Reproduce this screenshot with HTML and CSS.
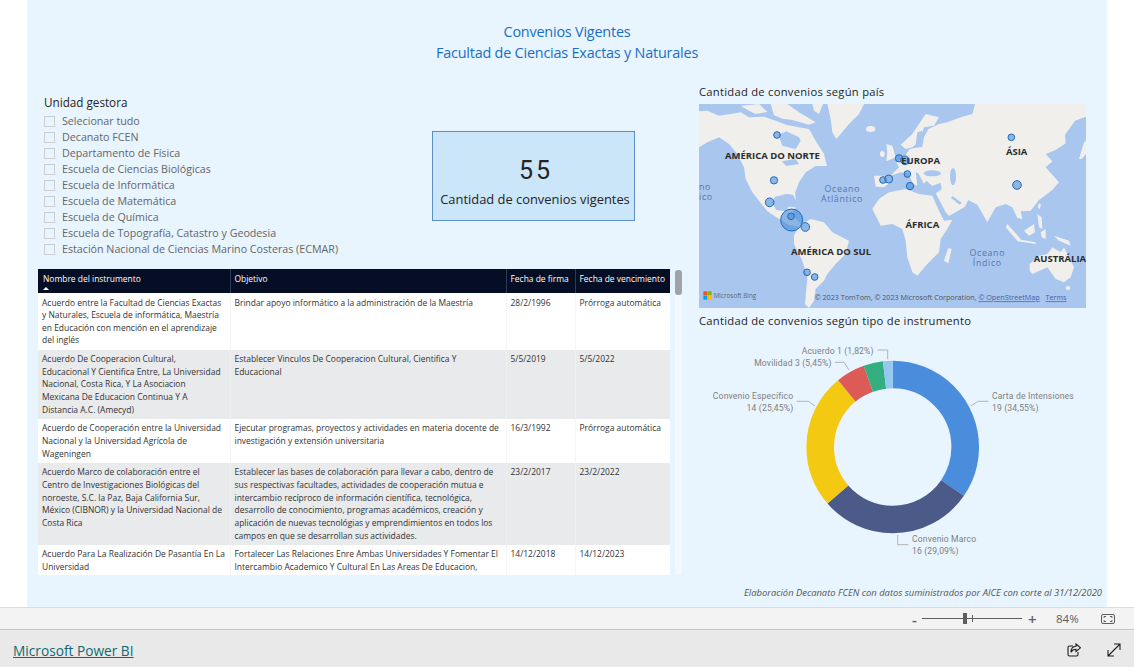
FILE: index.html
```html
<!DOCTYPE html>
<html lang="es">
<head>
<meta charset="utf-8">
<title>Convenios Vigentes</title>
<link rel="stylesheet" href="styles.css">
</head>
<body>
<div class="app">
  <main class="stage">
    <section class="canvas">
      <h1 class="report-title">Convenios Vigentes<br>Facultad de Ciencias Exactas y Naturales</h1>
      <div class="board">
        <div class="left">
          <div class="upper">
            <div class="slicer">
              <h2 class="slicer-title">Unidad gestora</h2>
              <ul class="slicer-list">
                <li class="slicer-item"><span class="check"></span>Selecionar tudo</li>
                <li class="slicer-item"><span class="check"></span>Decanato FCEN</li>
                <li class="slicer-item"><span class="check"></span>Departamento de Física</li>
                <li class="slicer-item"><span class="check"></span>Escuela de Ciencias Biológicas</li>
                <li class="slicer-item"><span class="check"></span>Escuela de Informática</li>
                <li class="slicer-item"><span class="check"></span>Escuela de Matemática</li>
                <li class="slicer-item"><span class="check"></span>Escuela de Química</li>
                <li class="slicer-item"><span class="check"></span>Escuela de Topografía, Catastro y Geodesia</li>
                <li class="slicer-item"><span class="check"></span>Estación Nacional de Ciencias Marino Costeras (ECMAR)</li>
              </ul>
            </div>
            <div class="kpi">
              <div class="kpi-value">55</div>
              <div class="kpi-label">Cantidad de convenios vigentes</div>
            </div>
          </div>
          <div class="table-visual">
            <div class="table-clip">
              <table class="grid">
                <colgroup><col class="c1"><col class="c2"><col class="c3"><col class="c4"></colgroup>
                <thead>
                  <tr>
                    <th>Nombre del instrumento<span class="sort"></span></th>
                    <th>Objetivo</th>
                    <th>Fecha de firma</th>
                    <th>Fecha de vencimiento</th>
                  </tr>
                </thead>
                <tbody>
                  <tr>
                    <td>Acuerdo entre la Facultad de Ciencias Exactas<br>y Naturales, Escuela de informática, Maestría<br>en Educación con mención en el aprendizaje<br>del inglés</td>
                    <td>Brindar apoyo informático a la administración de la Maestría</td>
                    <td>28/2/1996</td>
                    <td>Prórroga automática</td>
                  </tr>
                  <tr class="alt">
                    <td>Acuerdo De Cooperacion Cultural,<br>Educacional Y Cientifica Entre, La Universidad<br>Nacional, Costa Rica, Y La Asociacion<br>Mexicana De Educacion Continua Y A<br>Distancia A.C. (Amecyd)</td>
                    <td>Establecer Vinculos De Cooperacion Cultural, Cientifica Y<br>Educacional</td>
                    <td>5/5/2019</td>
                    <td>5/5/2022</td>
                  </tr>
                  <tr>
                    <td>Acuerdo de Cooperación entre la Universidad<br>Nacional y la Universidad Agrícola de<br>Wageningen</td>
                    <td>Ejecutar programas, proyectos y actividades en materia docente de<br>investigación y extensión universitaria</td>
                    <td>16/3/1992</td>
                    <td>Prórroga automática</td>
                  </tr>
                  <tr class="alt">
                    <td>Acuerdo Marco de colaboración entre el<br>Centro de Investigaciones Biológicas del<br>noroeste, S.C. la Paz, Baja California Sur,<br>México (CIBNOR) y la Universidad Nacional de<br>Costa Rica</td>
                    <td>Establecer las bases de colaboración para llevar a cabo, dentro de<br>sus respectivas facultades, actividades de cooperación mutua e<br>intercambio recíproco de información científica, tecnológica,<br>desarrollo de conocimiento, programas académicos, creación y<br>aplicación de nuevas tecnológias y emprendimientos en todos los<br>campos en que se desarrollan sus actividades.</td>
                    <td>23/2/2017</td>
                    <td>23/2/2022</td>
                  </tr>
                  <tr>
                    <td>Acuerdo Para La Realización De Pasantía En La<br>Universidad</td>
                    <td>Fortalecer Las Relaciones Enre Ambas Universidades Y Fomentar El<br>Intercambio Academico Y Cultural En Las Areas De Educacion,</td>
                    <td>14/12/2018</td>
                    <td>14/12/2023</td>
                  </tr>
                </tbody>
              </table>
            </div>
            <div class="scrollbar"><div class="thumb"></div></div>
          </div>
        </div>
        <div class="right">
          <h2 class="chart-title">Cantidad de convenios según país</h2>
          <svg class="map" viewBox="27 72 1161 612" width="387" height="204" xmlns="http://www.w3.org/2000/svg">
            <rect class="sea" x="27" y="72" width="1161" height="612"/>
            <g class="land" transform="translate(27 72)">
              <path d="M0 22L25 20L60 35L95 30L125 25L150 40L195 38L230 50L262 62L300 70L330 75L350 110L375 150L384 186L350 186L320 205L300 235L288 268L292 290L282 272L262 270L228 278L218 296L232 318L262 322L268 308L290 310L278 330L296 350L308 362L296 368L268 362L240 345L205 322L180 290L160 265L140 225L135 190L115 150L90 120L60 100L25 115L0 130Z"/>
              <path d="M125 5L180 0L205 24L170 30L150 20ZM215 0L265 0L300 25L350 55L330 62L280 48L250 44L225 34ZM340 0L372 0L360 30L345 20Z"/>
              <path d="M385 0L495 0L480 30L450 60L425 90L412 105L400 85L395 45Z"/>
              <ellipse cx="515" cy="75" rx="14" ry="9"/>
              <path d="M300 365L335 345L375 355L400 385L450 410L440 450L410 480L385 510L375 530L350 555L345 590L330 612L318 600L325 520L310 470L285 420L285 395Z"/>
            </g>
            <g class="inland" transform="translate(27 72)">
              <path d="M238 92L262 82L300 100L305 110L290 135L250 125Z"/>
              <path d="M248 172L290 165L300 180L262 186Z"/>
            </g>
            <g class="land" transform="translate(597 72)">
              <path d="M-50 315L-30 285L0 265L50 255L90 270L130 275L150 320L165 350L190 347L175 375L155 405L150 445L115 480L85 515L70 505L55 460L50 410L40 375L10 360L-25 365Z"/>
              <path d="M178 432L188 435L178 478L165 470Z"/>
              <path d="M-45 215L5 215L10 230L-15 250L-40 248Z"/>
              <path d="M5 215L30 190L22 175L48 155L62 135L100 128L105 100L118 75L150 60L175 55L215 40L250 30L258 0L591 0L591 38L558 50L528 92L530 118L500 138L470 150L490 172L470 190L510 235L490 258L450 288L425 320L395 322L400 345L385 342L370 310L350 300L320 310L295 355L265 302L238 288L228 308L180 336L170 325L140 268L158 256L155 236L130 246L112 230L105 240L88 208L80 205L85 245L72 240L58 208L35 205Z"/>
              <path d="M35 122L70 90L110 30L150 40L135 65L105 70L92 110L70 130L50 135Z"/>
              <path d="M-8 120L10 125L20 160L-8 172L-5 145Z"/>
              <ellipse cx="-20" cy="150" rx="7" ry="9"/>
              <path d="M355 360L395 405L385 410L350 370ZM385 405L440 415L440 420L385 412ZM405 380L435 360L438 385L420 395ZM445 330L458 340L460 375L450 370ZM455 385L470 375L470 405L458 400ZM495 395L540 410L545 425L510 410ZM570 165L585 115L591 110L591 150L578 165ZM450 298L456 302L452 316L446 310Z"/>
              <path d="M422 480L450 455L475 450L490 430L515 445L525 430L555 490L545 520L525 535L500 525L475 490L430 510L422 500Z"/>
              <ellipse cx="537" cy="552" rx="7" ry="6"/>
            </g>
            <g class="inland" transform="translate(597 72)">
              <ellipse cx="130" cy="208" rx="26" ry="9"/>
              <ellipse cx="192" cy="218" rx="9" ry="26"/>
              <path d="M190 276L218 296L212 302L186 282Z"/>
              <path d="M85 85L100 80L95 125L80 120Z"/>
            </g>
            <g class="bubbles">
              <circle cx="305" cy="420" r="33"/><circle cx="303" cy="409" r="10"/>
              <circle cx="261" cy="165" r="10"/><circle cx="252" cy="301" r="11"/>
              <circle cx="239" cy="367" r="13"/><circle cx="346" cy="441" r="13"/>
              <circle cx="351" cy="577" r="10"/><circle cx="374" cy="591" r="10"/>
              <circle cx="627" cy="235" r="11"/><circle cx="645" cy="241" r="13"/>
              <circle cx="579" cy="300" r="10"/><circle cx="596" cy="297" r="12"/>
              <circle cx="652" cy="282" r="10"/><circle cx="660" cy="318" r="11"/>
              <circle cx="964" cy="172" r="10"/><circle cx="981" cy="315" r="13"/>
            </g>
            <g class="map-labels">
              <text x="247" y="236" text-anchor="middle">AMÉRICA DO NORTE</text>
              <text x="692" y="251" text-anchor="middle">EUROPA</text>
              <text x="980" y="226" text-anchor="middle">ÁSIA</text>
              <text x="697" y="443" text-anchor="middle">ÁFRICA</text>
              <text x="423" y="524" text-anchor="middle">AMÉRICA DO SUL</text>
              <text x="1110" y="545" text-anchor="middle">AUSTRÁLIA</text>
            </g>
            <g class="map-water">
              <text x="457" y="335" text-anchor="middle">Oceano</text>
              <text x="456" y="365" text-anchor="middle">Atlântico</text>
              <text x="892" y="527" text-anchor="middle">Oceano</text>
              <text x="892" y="557" text-anchor="middle">Índico</text>
              <text x="27" y="331">no</text>
              <text x="27" y="361">ico</text>
            </g>
            <g class="bing-logo">
              <rect class="b1" x="40" y="634" width="12" height="12"/>
              <rect class="b2" x="53" y="634" width="12" height="12"/>
              <rect class="b3" x="40" y="647" width="12" height="12"/>
              <rect class="b4" x="53" y="647" width="12" height="12"/>
            </g>
            <text class="bing" x="71" y="653">Microsoft Bing</text>
            <text class="attrib" x="374" y="661">© 2023 TomTom, © 2023 Microsoft Corporation, <tspan class="attrib-link">© OpenStreetMap</tspan>  <tspan class="attrib-link" dx="12">Terms</tspan></text>
          </svg>
          <h2 class="chart-title chart-title-2">Cantidad de convenios según tipo de instrumento</h2>
          <svg class="donut" viewBox="0 0 387 232" width="387" height="232" xmlns="http://www.w3.org/2000/svg">
            <g class="ring" transform="rotate(-90 193.7 115)" fill="none" stroke-width="27.6">
              <circle cx="193.7" cy="115" r="72.5" pathLength="100" stroke="#4a8ddc" stroke-dasharray="34.55 65.45" stroke-dashoffset="0"/>
              <circle cx="193.7" cy="115" r="72.5" pathLength="100" stroke="#4c5a89" stroke-dasharray="29.09 70.91" stroke-dashoffset="-34.55"/>
              <circle cx="193.7" cy="115" r="72.5" pathLength="100" stroke="#f3c911" stroke-dasharray="25.45 74.55" stroke-dashoffset="-63.64"/>
              <circle cx="193.7" cy="115" r="72.5" pathLength="100" stroke="#dc5b57" stroke-dasharray="5.45 94.55" stroke-dashoffset="-89.09"/>
              <circle cx="193.7" cy="115" r="72.5" pathLength="100" stroke="#33ae81" stroke-dasharray="3.64 96.36" stroke-dashoffset="-94.54"/>
              <circle cx="193.7" cy="115" r="72.5" pathLength="100" stroke="#95c8f0" stroke-dasharray="1.82 98.18" stroke-dashoffset="-98.18"/>
            </g>
            <g class="leaders">
              <polyline points="271.7,74 279.3,69.3 289.3,69.3"/>
              <polyline points="198.7,203 198.7,212.7 209.3,212.7"/>
              <polyline points="97.7,69.3 109.3,69.3 116,74"/>
              <polyline points="136,30.3 145,30.3 150,38"/>
              <polyline points="178.7,18 188.7,18 188.7,27.3"/>
            </g>
            <g class="donut-labels">
              <text x="293" y="67">Carta de Intensiones</text>
              <text x="293" y="79">19 (34,55%)</text>
              <text x="213" y="210">Convenio Marco</text>
              <text x="213" y="222">16 (29,09%)</text>
              <text x="94.3" y="67" text-anchor="end">Convenio Específico</text>
              <text x="94.3" y="79" text-anchor="end">14 (25,45%)</text>
              <text x="132.7" y="34" text-anchor="end">Movilidad 3 (5,45%)</text>
              <text x="174.7" y="22" text-anchor="end">Acuerdo 1 (1,82%)</text>
            </g>
          </svg>
        </div>
      </div>
      <p class="note">Elaboración Decanato FCEN con datos suministrados por AICE con corte al 31/12/2020</p>
    </section>
  </main>
  <div class="status">
    <span class="zoom-btn">-</span>
    <div class="slider"><span class="slider-tick"></span><span class="slider-thumb"></span></div>
    <span class="zoom-btn zoom-plus">+</span>
    <span class="zoom-pct">84%</span>
    <svg class="fit" viewBox="0 0 14 10" width="14" height="10" xmlns="http://www.w3.org/2000/svg">
      <rect x="0.5" y="0.5" width="13" height="9" rx="1.5"/>
      <path d="M3 4V2.500H5M9 2.500H11V4M11 6V7.500H9M5 7.500H3V6"/>
    </svg>
  </div>
  <footer class="footer">
    <a class="brand" href="#">Microsoft Power BI</a>
    <div class="footer-icons">
      <svg class="ficon" viewBox="0 0 14 14" width="14" height="14" xmlns="http://www.w3.org/2000/svg">
        <path d="M6 3H2.500C1.700 3 1 3.700 1 4.500V11.500C1 12.300 1.700 13 2.500 13H9.500C10.300 13 11 12.300 11 11.500V9"/>
        <path d="M9 1L13.500 4.800L9 8.500V6.300C6.800 6.300 5 7.300 4 9.300C4 6 6 3.500 9 3.300Z"/>
      </svg>
      <svg class="ficon" viewBox="0 0 14 14" width="14" height="14" xmlns="http://www.w3.org/2000/svg">
        <path d="M1.500 12.500L12.500 1.500M7 1H13V7M1 7V13H7"/>
      </svg>
    </div>
  </footer>
</div>
</body>
</html>
```
FILE: styles.css
```css
* { box-sizing: border-box; }
html, body { margin: 0; padding: 0; height: 100%; background: #fff; overflow: hidden; }
body { font-family: "Open Sans", "Liberation Sans", sans-serif; }
h1, h2, p, ul { margin: 0; padding: 0; font-weight: 400; }
ul { list-style: none; }

.app { display: flex; flex-direction: column; height: 667px; }
.stage { height: 607px; padding: 0 27px; flex: none; }
.canvas { height: 607px; background: #e8f4fe; padding-top: 21px; overflow: hidden; }

.report-title { text-align: center; font-size: 14.400px; line-height: 21px; color: #1a6fc4; height: 42px; letter-spacing: -0.2px; }

.board { display: flex; gap: 17px; margin: 21px 21px 0 11px; height: 491px; }
.left { width: 644px; flex: none; display: flex; flex-direction: column; }
.right { width: 387px; flex: none; }

.upper { height: 185px; display: flex; flex: none; }
.slicer { width: 394px; padding: 10px 0 0 6px; flex: none; }
.slicer-title { font-size: 11.700px; line-height: 16px; color: #252423; margin-bottom: 3px; }
.slicer-item { display: flex; align-items: center; height: 16px; font-size: 10.700px; color: #666; white-space: nowrap; }
.check { width: 11px; height: 11px; border: 1px solid #c8ced4; margin-right: 7px; flex: none; }

.kpi { width: 203px; height: 90px; margin-top: 47px; background: #cbe5f9; border: 1px solid #5b8fc7; display: flex; flex-direction: column; align-items: center; }
.kpi-value { font-family: Roboto, sans-serif; font-size: 25px; line-height: 30px; letter-spacing: 3px; color: #252423; margin-top: 24px; padding-left: 5px; }
.kpi-label { font-size: 12.900px; line-height: 16px; color: #252423; margin: 5px 0 0 3px; white-space: nowrap; }

.table-visual { display: flex; height: 306px; }
.table-clip { width: 632px; height: 306px; overflow: hidden; background: #fff; flex: none; }
.grid { border-collapse: collapse; table-layout: fixed; width: 632px; font-size: 8.460px; line-height: 12.650px; color: #333; }
.c1 { width: 192px; } .c2 { width: 276px; } .c3 { width: 69px; } .c4 { width: 95px; }
.grid th { background: #050e24; color: #fff; font-weight: 400; font-size: 8.450px; text-align: left; height: 24px; padding: 0 0 3px 4px; vertical-align: middle; border-left: 1px solid #2b3a55; white-space: nowrap; position: relative; }
.grid th:first-child { border-left: 0; padding-left: 5px; }
.grid td { padding: 3.500px 3px 2.500px 4px; vertical-align: top; white-space: nowrap; border-left: 1px solid #f5f5f5; }
.grid td:first-child { border-left: 0; }
.grid .alt td { background: #e9eaec; border-left-color: #eeeff1; }
.sort { position: absolute; left: 5px; bottom: 3px; width: 0; height: 0; border-left: 3.500px solid transparent; border-right: 3.500px solid transparent; border-bottom: 3.500px solid #fff; }

.scrollbar { width: 7px; height: 306px; margin-left: 5px; background: #f2f8fe; border-radius: 3px; flex: none; padding-top: 1px; }
.thumb { width: 7px; height: 25px; border-radius: 3px; background: #a0a3a6; }

.chart-title { font-size: 11.200px; line-height: 15px; height: 20px; color: #252423; letter-spacing: 0.27px; white-space: nowrap; }
.chart-title-2 { margin-top: 4px; line-height: 18px; }
.map, .donut { display: block; }

.sea { fill: #a9c6ef; }
.land { fill: #f0efeb; filter: blur(1.500px); }
.inland { fill: #a9c6ef; filter: blur(1.500px); }
.bubbles circle { fill: #4a8ddc; fill-opacity: 0.6; stroke: #1f6cc0; stroke-width: 3; }
.map-labels text { font-family: "Open Sans", sans-serif; font-weight: 700; font-size: 28.500px; fill: #2b2b2b; }
.map-water text { font-family: "Open Sans", sans-serif; font-size: 26.500px; letter-spacing: 2px; fill: #5877ad; }
.b1 { fill: #f25022; } .b2 { fill: #7fba00; } .b3 { fill: #00a4ef; } .b4 { fill: #ffb900; }
.bing { font-family: "Open Sans", sans-serif; font-size: 19px; fill: #666; }
.attrib { font-family: "Open Sans", sans-serif; font-size: 21.600px; fill: #555; }
.attrib-link { fill: #4a5ea8; text-decoration: underline; }

.leaders polyline { fill: none; stroke: #b3b3b3; stroke-width: 1; }
.donut-labels text { font-family: Roboto, sans-serif; font-size: 8.600px; letter-spacing: 0.15px; fill: #7f7f7f; }

.note { text-align: right; font-style: italic; font-size: 9.400px; line-height: 14px; color: #555; margin-top: 11px; padding-right: 5px; white-space: nowrap; }

.status { height: 23px; flex: none; background: #f3f3f3; border-top: 1px solid #dcdcdc; border-bottom: 1px solid #c6c6c6; display: flex; align-items: center; padding-left: 912px; color: #605e5c; }
.zoom-btn { width: 10px; font-size: 15px; line-height: 20px; font-weight: 600; text-align: left; }
.zoom-plus { margin-left: 6px; }
.slider { position: relative; width: 100px; height: 1px; background: #605e5c; }
.slider-tick { position: absolute; left: 50px; top: -3px; width: 1px; height: 7px; background: #605e5c; }
.slider-thumb { position: absolute; left: 41px; top: -5px; width: 4px; height: 11px; background: #605e5c; }
.zoom-pct { margin-left: 18px; font-size: 11.500px; }
.fit { margin-left: 22px; fill: none; stroke: #605e5c; stroke-width: 1; }

.footer { flex: 1; background: #e9e9e9; display: flex; align-items: center; justify-content: space-between; padding: 0 13px; }
.brand { font-size: 13.700px; color: #0f6a70; text-decoration: underline; margin-top: 3px; }
.footer-icons { display: flex; gap: 26px; margin-top: 2px; }
.ficon { fill: none; stroke: #1f1f1f; stroke-width: 1.100; }
```
